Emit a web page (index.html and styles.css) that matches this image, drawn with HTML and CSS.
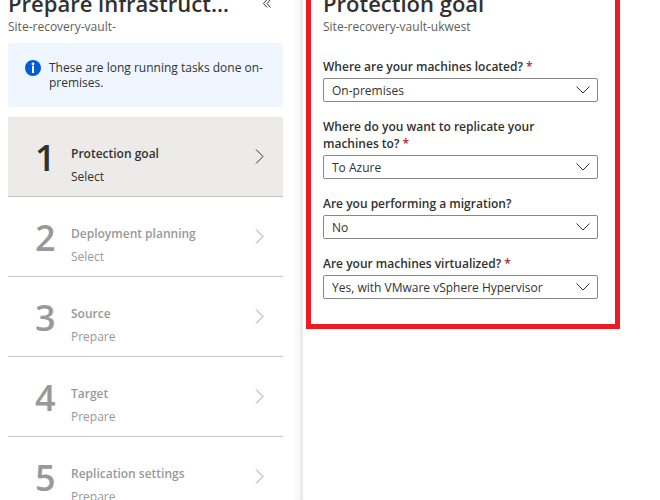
FILE: index.html
```html
<!DOCTYPE html>
<html lang="en">

<head>
    <meta charset="UTF-8">
    <meta name="viewport" content="width=device-width, initial-scale=1.0">
    <title>Prepare infrastructure</title>
    <link rel="stylesheet" href="styles.css">
</head>

<body>

    <div class="blades">

        <!-- Left blade: list of steps -->
        <section class="blade steps-blade">
            <header class="blade-header">
                <h1>Prepare infrastruct…</h1>
                <button class="collapse" type="button" aria-label="Collapse">
                    <svg width="8" height="9" viewBox="0 0 8 9">
                        <path d="M4 0.5L0.5 4.5L4 8.5M7.5 0.5L4 4.5L7.5 8.5" />
                    </svg>
                </button>
            </header>
            <p class="subtitle">Site-recovery-vault-</p>

            <div class="info">
                <svg class="info-icon" width="16" height="16" viewBox="0 0 16 16">
                    <circle cx="8" cy="8" r="8" fill="#015cda" />
                    <circle cx="8" cy="4" r="1.4" fill="#fff" />
                    <rect x="7" y="6" width="2" height="7" fill="#fff" />
                </svg>
                <p>These are long running tasks done on-premises.</p>
            </div>

            <ol class="steps">
                <li>
                    <button class="step active" type="button">
                        <span class="number">1</span>
                        <span class="text"><span class="name">Protection goal</span><span class="action">Select</span></span>
                        <svg class="arrow" width="9" height="15" viewBox="0 0 9 15"><path d="M1 0.5L8 7.5L1 14.5" /></svg>
                    </button>
                </li>
                <li>
                    <button class="step" type="button">
                        <span class="number">2</span>
                        <span class="text"><span class="name">Deployment planning</span><span class="action">Select</span></span>
                        <svg class="arrow" width="9" height="15" viewBox="0 0 9 15"><path d="M1 0.5L8 7.5L1 14.5" /></svg>
                    </button>
                </li>
                <li>
                    <button class="step" type="button">
                        <span class="number">3</span>
                        <span class="text"><span class="name">Source</span><span class="action">Prepare</span></span>
                        <svg class="arrow" width="9" height="15" viewBox="0 0 9 15"><path d="M1 0.5L8 7.5L1 14.5" /></svg>
                    </button>
                </li>
                <li>
                    <button class="step" type="button">
                        <span class="number">4</span>
                        <span class="text"><span class="name">Target</span><span class="action">Prepare</span></span>
                        <svg class="arrow" width="9" height="15" viewBox="0 0 9 15"><path d="M1 0.5L8 7.5L1 14.5" /></svg>
                    </button>
                </li>
                <li>
                    <button class="step" type="button">
                        <span class="number">5</span>
                        <span class="text"><span class="name">Replication settings</span><span class="action">Prepare</span></span>
                        <svg class="arrow" width="9" height="15" viewBox="0 0 9 15"><path d="M1 0.5L8 7.5L1 14.5" /></svg>
                    </button>
                </li>
            </ol>
        </section>

        <!-- Right blade: protection goal form -->
        <section class="blade goal-blade">
            <form class="goal">
                <header class="blade-header">
                    <h1>Protection goal</h1>
                </header>
                <p class="subtitle">Site-recovery-vault-ukwest</p>

                <div class="field">
                    <label for="location">Where are your machines located? <span class="required">*</span></label>
                    <div class="dropdown">
                        <select id="location">
                            <option>On-premises</option>
                        </select>
                        <svg class="chevron" width="14" height="8" viewBox="0 0 14 8"><path d="M0.5 0.5L7 7L13.5 0.5" /></svg>
                    </div>
                </div>

                <div class="field">
                    <label for="destination">Where do you want to replicate your machines to? <span class="required">*</span></label>
                    <div class="dropdown">
                        <select id="destination">
                            <option>To Azure</option>
                        </select>
                        <svg class="chevron" width="14" height="8" viewBox="0 0 14 8"><path d="M0.5 0.5L7 7L13.5 0.5" /></svg>
                    </div>
                </div>

                <div class="field">
                    <label for="migration">Are you performing a migration?</label>
                    <div class="dropdown">
                        <select id="migration">
                            <option>No</option>
                        </select>
                        <svg class="chevron" width="14" height="8" viewBox="0 0 14 8"><path d="M0.5 0.5L7 7L13.5 0.5" /></svg>
                    </div>
                </div>

                <div class="field">
                    <label for="virtualized">Are your machines virtualized? <span class="required">*</span></label>
                    <div class="dropdown">
                        <select id="virtualized">
                            <option>Yes, with VMware vSphere Hypervisor</option>
                        </select>
                        <svg class="chevron" width="14" height="8" viewBox="0 0 14 8"><path d="M0.5 0.5L7 7L13.5 0.5" /></svg>
                    </div>
                </div>
            </form>
        </section>

    </div>

</body>

</html>
```

FILE: styles.css
```css
* {
    box-sizing: border-box;
}

body {
    margin: 0;
    font-family: "Open Sans", "Noto Sans", sans-serif;
    font-size: 12px;
    line-height: 16px;
    color: #323130;
    background-color: #fff;
}

h1,
p,
ol {
    margin: 0;
    padding: 0;
}

button,
select {
    font: inherit;
    color: inherit;
}

.blades {
    display: grid;
    grid-template-columns: 303px 1fr;
    height: 100vh;
    overflow: hidden;
}

/* blade header, scrolled partly out of view */
.blade-header {
    display: flex;
    justify-content: space-between;
    align-items: center;
    height: 32px;
    margin-top: -13px;
}

h1 {
    font-size: 22px;
    font-weight: 600;
    line-height: 32px;
    white-space: nowrap;
}

.subtitle {
    color: #605e5c;
}

.collapse {
    display: flex;
    padding: 0 12px;
    border: none;
    background: none;
    cursor: pointer;
}

svg path {
    fill: none;
    stroke: currentColor;
    stroke-width: 1;
}

.steps-blade {
    padding: 0 20px 0 8px;
    background: linear-gradient(to left, #e4e4e4, #f8f8f8 4px, #fff 12px);
}

/* info box */
.info {
    display: flex;
    gap: 8px;
    margin-top: 8px;
    padding: 17px 12px 16px 17px;
    height: 64px;
    border-radius: 2px;
    background-color: #f0f6ff;
}

.info p {
    line-height: 15px;
}

.info-icon {
    flex: none;
}

/* steps */
.steps {
    margin-top: 10px;
    list-style: none;
}

.step {
    display: flex;
    align-items: center;
    width: 100%;
    height: 80px;
    padding: 0 19px 0 27px;
    border: none;
    border-bottom: 1px solid #c8c6c4;
    background: none;
    color: #999;
    text-align: left;
    cursor: pointer;
}

.step.active {
    background-color: #edebe9;
    color: #323130;
}

.number {
    width: 36px;
    padding-top: 2px;
    font-size: 36px;
    font-weight: 600;
    line-height: 40px;
}

.text {
    display: flex;
    flex: 1;
    flex-direction: column;
    gap: 7px;
    padding-top: 18px;
}

.name {
    font-weight: 600;
}

/* form */
.goal {
    margin: 0 40px 0 3px;
    padding: 0 17px 25px 12px;
    border: 5px solid #ed1c24;
    border-top: none;
}

.field {
    margin-top: 16px;
}

.subtitle + .field {
    margin-top: 23px;
}

label {
    display: block;
    padding: 0 28px 3px 0;
    font-weight: 600;
    line-height: 17px;
}

.required {
    color: #a4262c;
}

.dropdown {
    display: grid;
    align-items: center;
}

.dropdown select,
.chevron {
    grid-area: 1 / 1;
}

.dropdown select {
    width: 100%;
    height: 24px;
    padding: 1px 32px 0 8px;
    border: 1px solid #8a8886;
    border-radius: 2px;
    background-color: #fff;
    appearance: none;
}

.chevron {
    justify-self: end;
    margin-right: 8px;
    pointer-events: none;
}
```
